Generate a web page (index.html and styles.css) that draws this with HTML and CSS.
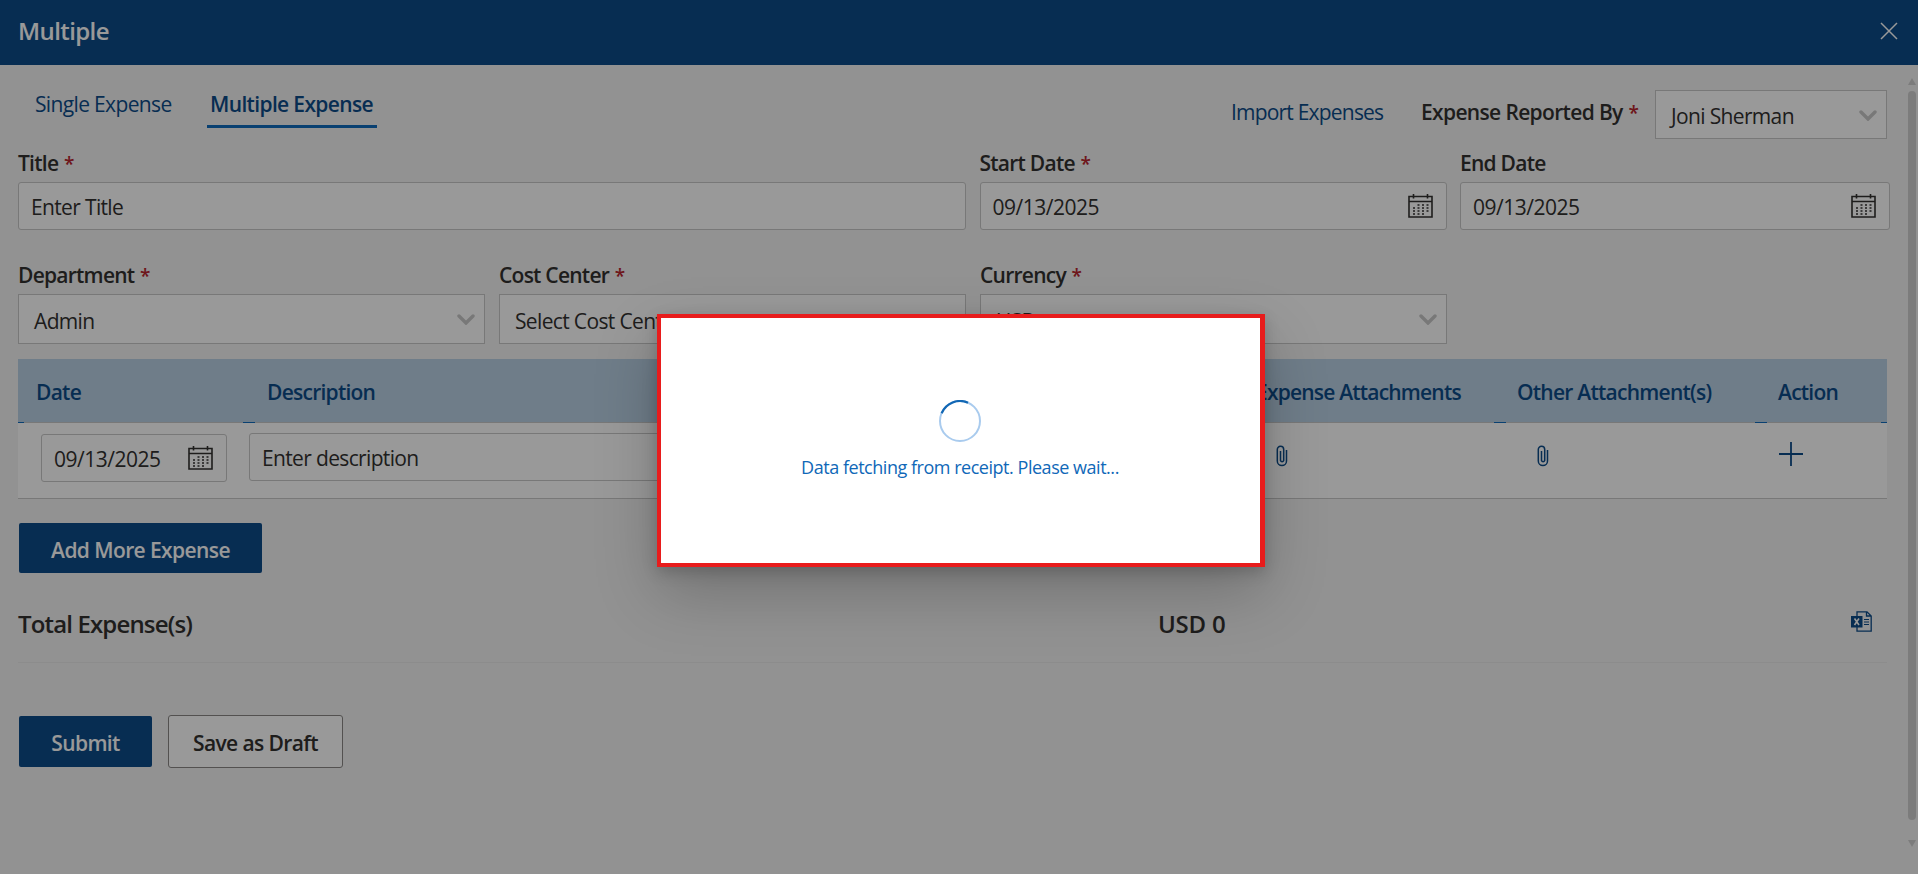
FILE: index.html
```html
<!DOCTYPE html>
<html lang="en">
<head>
<meta charset="utf-8">
<title>Multiple Expense</title>
<link rel="stylesheet" href="styles.css">
</head>
<body>
<svg class="defs" width="0" height="0" aria-hidden="true">
  <symbol id="calendar" viewBox="0 0 25 24">
    <path d="M1 2.500h23v20.500H1zM1 7.500h23M5.500 0v4.500M19.500 0v4.500" fill="none" stroke="currentColor" stroke-width="1.600"/>
    <path d="M9.500 11h11.500M5 14h16M5 17h16M5 20h12" fill="none" stroke="currentColor" stroke-width="1.700" stroke-dasharray="2 2.500"/>
  </symbol>
  <symbol id="chevron" viewBox="0 0 18 11">
    <path d="M2 2l7 7 7-7" fill="none" stroke="currentColor" stroke-width="3.400" stroke-linecap="round"/>
  </symbol>
  <symbol id="clip" viewBox="0 0 12 22">
    <path d="M10.500 5v11a4.600 4.600 0 0 1-9.200 0V4.500a3.200 3.200 0 0 1 6.400 0V15.500a1.700 1.700 0 0 1-3.200 0V6" fill="none" stroke="currentColor" stroke-width="1.500"/>
  </symbol>
</svg>
<div class="page">
  <header class="topbar">
    <h1 class="heading">Multiple</h1>
    <svg class="close" viewBox="0 0 18 18"><path d="M1 1l16 16M17 1 1 17" stroke="currentColor" stroke-width="1.500"/></svg>
  </header>
  <main class="content">
    <div class="toolbar">
      <nav class="tabs">
        <a class="tab">Single Expense</a>
        <a class="tab tab-active">Multiple Expense</a>
      </nav>
      <a class="import">Import Expenses</a>
      <span class="label reporter-label">Expense Reported By <b class="req">*</b></span>
      <div class="select reporter"><span>Joni Sherman</span><svg class="chev"><use href="#chevron"/></svg></div>
    </div>
    <div class="grid row-one">
      <label class="field"><span class="label">Title <b class="req">*</b></span><span class="input"><span>Enter Title</span></span></label>
      <label class="field"><span class="label">Start Date <b class="req">*</b></span><span class="input"><span class="num">09/13/2025</span><svg class="cal"><use href="#calendar"/></svg></span></label>
      <label class="field"><span class="label">End Date</span><span class="input"><span class="num">09/13/2025</span><svg class="cal"><use href="#calendar"/></svg></span></label>
    </div>
    <div class="grid row-two">
      <label class="field"><span class="label">Department <b class="req">*</b></span><span class="select"><span>Admin</span><svg class="chev"><use href="#chevron"/></svg></span></label>
      <label class="field"><span class="label">Cost Center <b class="req">*</b></span><span class="select"><span>Select Cost Center</span><svg class="chev"><use href="#chevron"/></svg></span></label>
      <label class="field"><span class="label">Currency <b class="req">*</b></span><span class="select"><span>USD</span><svg class="chev"><use href="#chevron"/></svg></span></label>
    </div>
    <section class="table">
      <div class="thead">
        <span>Date</span><span>Description</span><span class="th-exp">Expense Attachments</span><span>Other Attachment(s)</span><span>Action</span>
      </div>
      <div class="ticks"><i class="tick"></i><i class="tick wide"></i><i class="tick wide"></i><i class="tick wide"></i><i class="tick"></i></div>
      <div class="trow">
        <span class="input row-date"><span class="num">09/13/2025</span><svg class="cal"><use href="#calendar"/></svg></span>
        <span class="input row-desc"><span>Enter description</span></span>
        <svg class="clip"><use href="#clip"/></svg>
        <svg class="clip"><use href="#clip"/></svg>
        <svg class="plus" viewBox="0 0 24 24"><path d="M12 0v24M0 12h24" stroke="currentColor" stroke-width="1.800"/></svg>
      </div>
    </section>
    <button class="btn primary add">Add More Expense</button>
    <div class="total">
      <span class="total-name">Total Expense(s)</span><span class="total-sum">USD 0</span>
      <svg class="excel" viewBox="0 0 21 21">
        <path d="M6 5V.8h10l4.200 4.200v15.200H6V16M15.500.8V5h4.500" fill="none" stroke="currentColor" stroke-width="1.300"/>
        <path d="M0 5h11.500v11.500H0z" fill="currentColor"/>
        <path d="M3.500 7.500l4.500 6.500M8 7.500 3.500 14" class="excel-x"/>
        <path d="M13 8.500h5M13 11h5M13 13.500h5" stroke="currentColor" stroke-width="1.200"/>
      </svg>
    </div>
    <div class="actions">
      <button class="btn primary submit">Submit</button>
      <button class="btn draft">Save as Draft</button>
    </div>
  </main>
  <div class="scrollbar"><i class="arrow up"></i><i class="thumb"></i><i class="arrow down"></i></div>
</div>
<div class="overlay">
  <div class="dialog">
    <svg class="spinner" viewBox="0 0 42 42">
      <circle cx="21" cy="21" r="20" fill="none" stroke="#a9cbee" stroke-width="2"/>
      <path d="M2.600 13.200A20 20 0 0 1 29 2.700" fill="none" stroke="#1267b4" stroke-width="2.200"/>
    </svg>
    <p class="message">Data fetching from receipt. Please wait...</p>
  </div>
</div>
</body>
</html>
```
FILE: styles.css
```css
* { box-sizing: border-box; }
body { margin: 0; background: #f3f3f3; font: 21px/28px "Open Sans", "Noto Sans", sans-serif; color: #323130; letter-spacing: -0.65px; overflow: hidden; }
.defs { position: absolute; }
.page { position: relative; height: 874px; display: flex; flex-direction: column; }
.topbar { height: 65px; background: #0d4c89; color: #fff; display: flex; align-items: center; justify-content: space-between; padding: 0 20px 3px 18px; }
.heading { margin: 0; font-size: 24px; font-weight: 600; letter-spacing: -0.6px; }
.close { width: 18px; height: 18px; }
.content { padding: 0 31px 0 18px; display: flex; flex-direction: column; }
.toolbar { display: flex; height: 82px; align-items: flex-start; }
.tabs { display: flex; padding: 25px 0 0 17px; flex: 1; }
.tab { width: 172px; height: 38px; color: #0d4c89; white-space: nowrap; }
.tab-active { font-weight: 600; border-bottom: 3px solid #0f6cbd; padding: 0 3px; width: 170px; }
.import { width: 190px; padding-top: 33px; color: #0d4c89; white-space: nowrap; letter-spacing: -0.8px; }
.label { font-weight: 600; white-space: nowrap; letter-spacing: -0.75px; }
.req { color: #b8252e; font-weight: 600; font-size: 19px; line-height: 20px; margin-left: 1px; }
.reporter-label { width: 234px; padding-top: 33px; letter-spacing: -0.65px; }
.select { display: flex; align-items: center; justify-content: space-between; height: 50px; background: #fff; border: 1px solid #c8c8c8; padding: 3px 9px 0 15px; white-space: nowrap; }
.reporter { width: 232px; height: 49px; margin-top: 25px; }
.chev { width: 18px; height: 11px; color: #c8c8c8; position: relative; top: -1px; }
.grid { display: grid; }
.row-one { grid-template-columns: 948px 467px 430px; column-gap: 13.500px; width: 1873px; }
.row-two { grid-template-columns: 467px 467px 467px; column-gap: 14px; margin-top: 29px; }
.field { display: flex; flex-direction: column; }
.field .label { height: 35px; padding-top: 2px; }
.input { display: flex; align-items: center; justify-content: space-between; height: 48px; background: #fff; border: 1px solid #c8c8c8; border-radius: 3px; padding: 2px 13px 0 12px; white-space: nowrap; }
.cal { width: 25px; height: 24px; position: relative; top: -1px; }
.num { letter-spacing: -0.5px; }
.table { margin-top: 15px; }
.thead { height: 63px; display: grid; grid-template-columns: 231px 989px 261px 261px 1fr; align-items: center; padding-left: 18px; background: #bad0e4; color: #0d4c89; font-weight: 600; letter-spacing: -0.75px; padding-top: 2px; }
.th-exp { letter-spacing: -0.8px; }
.ticks { height: 1px; display: grid; grid-template-columns: 225px 1251px 261px 114px 18px; background: #c8c8c8; }
.tick { background: #0f6cbd; width: 6px; }
.tick.wide { width: 12px; }
.tick:last-child { justify-self: end; }
.trow { height: 76px; background: #fff; border-bottom: 1px solid #c8c8c8; display: flex; align-items: flex-start; padding: 10px 0 0 23px; color: #0d4c89; }
.trow .input { color: #323130; }
.row-date { width: 186px; margin: 1px 22px 0 0; }
.row-desc { width: 980px; margin-right: 47px; }
.clip { width: 12px; height: 22px; margin: 12px 249px 0 0; }
.plus { width: 24px; height: 24px; margin: 9px 0 0 -19px; }
.btn { font: 600 21px/28px "Open Sans", sans-serif; letter-spacing: -0.6px; border-radius: 2px; padding: 3px 0 0; white-space: nowrap; }
.primary { background: #0d4c89; color: #fff; border: 0; }
.add { width: 243px; height: 50px; margin: 24px 0 0 1px; }
.total { display: flex; height: 90px; border-bottom: 1px solid #eaeaea; align-items: center; padding-top: 12px; font-size: 24px; font-weight: 600; }
.total-name { width: 1140px; letter-spacing: -0.85px; }
.total-sum { flex: 1; letter-spacing: -0.2px; }
.excel { width: 21px; height: 21px; margin: 0 15px 4px 0; color: #0d4c89; }
.excel-x { stroke: #fff; stroke-width: 1.600; }
.actions { display: flex; gap: 16px; padding: 52px 0 0 1px; align-items: center; }
.submit { width: 133px; height: 51px; }
.draft { width: 175px; height: 53px; background: #fff; border: 1px solid #8a8886; color: #323130; border-radius: 3px; }
.scrollbar { position: absolute; right: 2px; top: 78px; width: 8px; display: flex; flex-direction: column; align-items: center; }
.thumb { width: 8px; height: 729px; border-radius: 4px; background: #cfcfcf; margin: 6px 0 20px; }
.arrow { border: 4px solid transparent; border-top: 0; border-bottom: 7px solid #cfcfcf; }
.down { border-bottom: 0; border-top: 7px solid #cfcfcf; }
.overlay { position: absolute; inset: 0; background: rgba(0,0,0,0.4); }
.dialog { position: absolute; left: 657px; top: 314px; width: 608px; height: 253px; background: #fff; border: 4px solid #e81c1c; border-right-width: 5px; box-shadow: 0 26px 58px rgba(0,0,0,0.22), 0 5px 14px rgba(0,0,0,0.18); display: flex; flex-direction: column; align-items: center; padding: 82px 1px 0 0; }
.spinner { width: 42px; height: 42px; }
.message { margin: 12px 0 0; color: #1068b8; font-size: 18px; line-height: 26px; letter-spacing: -0.47px; }
```
